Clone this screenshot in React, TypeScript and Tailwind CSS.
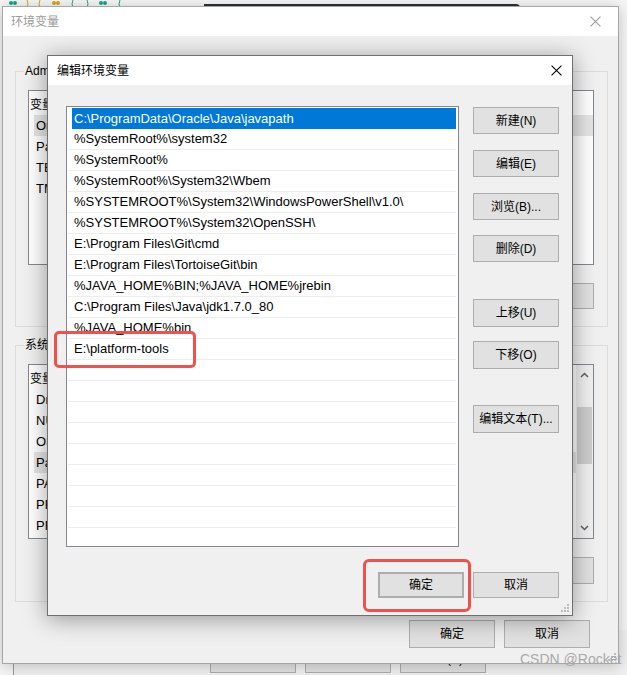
const FONT = "font-['Liberation_Sans','Noto_Sans_CJK_SC',sans-serif]";

const paths = [
  "C:\\ProgramData\\Oracle\\Java\\javapath",
  "%SystemRoot%\\system32",
  "%SystemRoot%",
  "%SystemRoot%\\System32\\Wbem",
  "%SYSTEMROOT%\\System32\\WindowsPowerShell\\v1.0\\",
  "%SYSTEMROOT%\\System32\\OpenSSH\\",
  "E:\\Program Files\\Git\\cmd",
  "E:\\Program Files\\TortoiseGit\\bin",
  "%JAVA_HOME%BIN;%JAVA_HOME%jrebin",
  "C:\\Program Files\\Java\\jdk1.7.0_80",
  "%JAVA_HOME%bin",
  "E:\\platform-tools",
];

const userVars = ["OneDrive", "Path", "TEMP", "TMP"];
const sysVars = [
  "DriverData",
  "NUMBER_OF_PROCESSORS",
  "OS",
  "Path",
  "PATHEXT",
  "PROCESSOR_ARCHITECTURE",
  "PROCESSOR_IDENTIFIER",
];

function Btn({ label, className = "" }: { label: string; className?: string }) {
  return (
    <div
      className={
        "flex w-[86px] shrink-0 items-center justify-center border border-[#adadad] bg-[#e1e1e1] text-[12px] text-black " +
        className
      }
    >
      {label}
    </div>
  );
}

function CloseX({ color, size }: { color: string; size: number }) {
  return (
    <svg width={size} height={size} viewBox="0 0 10 10">
      <path d="M0.5 0.5 L9.5 9.5 M9.5 0.5 L0.5 9.5" stroke={color} strokeWidth="1" />
    </svg>
  );
}

function Grip() {
  return (
    <svg width="9" height="9" viewBox="0 0 9 9">
      <rect x="7" y="1" width="2" height="2" fill="#bcbcbc" />
      <rect x="4" y="4" width="2" height="2" fill="#bcbcbc" />
      <rect x="7" y="4" width="2" height="2" fill="#bcbcbc" />
      <rect x="1" y="7" width="2" height="2" fill="#bcbcbc" />
      <rect x="4" y="7" width="2" height="2" fill="#bcbcbc" />
      <rect x="7" y="7" width="2" height="2" fill="#bcbcbc" />
    </svg>
  );
}

function VarList({ rows, selected, scroll }: { rows: string[]; selected: number; scroll?: boolean }) {
  return (
    <div className="ml-[12px] mt-[18px] flex h-[175px] w-[566px] overflow-hidden border border-[#828790] bg-white">
      <div className="flex-1 pt-[3px] text-[13px] text-black">
        <div className="flex h-[21px] items-center pl-[1px]">
          <span className="w-[200px] text-[12px]">变量</span>
          <span className="text-[12px]">值</span>
        </div>
        {rows.map((r, i) => (
          <div
            key={r + i}
            className={
              "ml-[5px] flex h-[21px] items-center pl-[2px] " + (i === selected ? "bg-[#e5e5e5]" : "")
            }
          >
            {r}
          </div>
        ))}
      </div>
      {scroll ? (
        <div className="flex w-[17px] flex-col bg-[#f0f0f0]">
          <div className="flex h-[20px] items-center justify-center">
            <svg width="9" height="6" viewBox="0 0 9 6">
              <path d="M1 5 L4.5 1.5 L8 5" stroke="#606060" strokeWidth="1.5" fill="none" />
            </svg>
          </div>
          <div className="mx-[1px] mt-[22px] h-[57px] bg-[#cdcdcd]" />
          <div className="flex-1" />
          <div className="flex h-[20px] items-center justify-center">
            <svg width="9" height="6" viewBox="0 0 9 6">
              <path d="M1 1 L4.5 4.5 L8 1" stroke="#606060" strokeWidth="1.5" fill="none" />
            </svg>
          </div>
        </div>
      ) : null}
    </div>
  );
}

function GroupBox({ title, height, className = "", children }: { title: string; height: string; className?: string; children: React.ReactNode }) {
  return (
    <div className={"relative w-[593px] border border-[#dcdcdc] " + height + " " + className}>
      <span className="absolute -top-[9px] left-[8px] bg-[#f0f0f0] px-[1px] text-[12px] leading-[16px] text-black">
        {title}
      </span>
      {children}
    </div>
  );
}

export default function App() {
  const emptyRows = Array.from({ length: 9 });

  return (
    <div className={`relative h-[675px] w-[627px] overflow-hidden bg-[#f6f6f6] ${FONT}`}>
      {/* desktop bits at the top */}
      <svg className="absolute left-0 top-0" width="140" height="8" viewBox="0 0 140 8">
        <circle cx="11" cy="3" r="2" fill="#17a589" />
        <circle cx="15" cy="3" r="2" fill="#17a589" />
        <path d="M27 0 Q29 4 27 8 M40 0 Q38 4 40 8" stroke="#d4a21a" strokeWidth="1" fill="none" />
        <circle cx="54" cy="3" r="2" fill="#d4a21a" />
        <circle cx="58" cy="3" r="2" fill="#d4a21a" />
        <path d="M73 0 Q71 4 73 8 M87 0 Q89 4 87 8" stroke="#17a589" strokeWidth="1" fill="none" />
        <circle cx="101" cy="3" r="2" fill="#17a589" />
        <circle cx="105" cy="3" r="2" fill="#17a589" />
        <path d="M120 0 Q118 4 120 8" stroke="#17a589" strokeWidth="1" fill="none" />
      </svg>
      <div className="absolute left-[204px] top-[4px] h-[6px] w-[316px] rounded-tr-[4px] bg-[#2d3139]" />

      {/* window behind, bottom strip */}
      <div className="absolute left-[13px] top-[630px] h-[60px] w-[614px] border-l border-[#9a9a9a] bg-[#f0f0f0]">
        <div className="flex gap-[9px] pl-[196px] pt-[15px]">
          <Btn label="确定" className="h-[28px]" />
          <Btn label="取消" className="h-[28px]" />
          <Btn label="应用(A)" className="h-[28px]" />
        </div>
      </div>

      {/* 环境变量 */}
      <div className="absolute left-[2px] top-[6px] flex h-[658px] w-[617px] flex-col border border-[#a6a6a6] bg-[#f0f0f0] shadow-[0_2px_14px_rgba(0,0,0,0.22)]">
        <div className="flex h-[29px] items-center justify-between bg-white pl-[8px] pr-[17px] text-[12px] text-[#9b9b9b]">
          <span>环境变量</span>
          <CloseX color="#9b9b9b" size={11} />
        </div>
        <div className="flex flex-1 flex-col pl-[12px] pt-[35px]">
          <GroupBox title="Administrator 的用户变量" height="h-[256px]">
            <VarList rows={userVars} selected={0} />
            <div className="mt-[18px] flex justify-end gap-[9px] pr-[13px]">
              <Btn label="新建(N)..." className="h-[26px]" />
              <Btn label="编辑(E)..." className="h-[26px]" />
              <Btn label="删除(D)" className="h-[26px]" />
            </div>
          </GroupBox>
          <GroupBox title="系统变量(S)" height="h-[257px]" className="mt-[18px]">
            <VarList rows={sysVars} selected={3} scroll />
            <div className="mt-[18px] flex justify-end gap-[9px] pr-[13px]">
              <Btn label="新建(W)..." className="h-[27px]" />
              <Btn label="编辑(I)..." className="h-[27px]" />
              <Btn label="删除(L)" className="h-[27px]" />
            </div>
          </GroupBox>
          <div className="mt-[18px] flex w-[593px] justify-end gap-[9px] pr-[18px]">
            <Btn label="确定" className="h-[28px]" />
            <Btn label="取消" className="h-[28px]" />
          </div>
        </div>
        <div className="absolute bottom-[2px] right-[2px]">
          <Grip />
        </div>
      </div>

      {/* 编辑环境变量 */}
      <div className="absolute left-[47px] top-[55px] flex h-[561px] w-[526px] flex-col border border-[#707070] bg-[#f0f0f0] shadow-[0_3px_22px_rgba(0,0,0,0.38)]">
        <div className="flex h-[29px] items-center justify-between bg-white pl-[9px] pr-[10px] text-[12px] text-black">
          <span>编辑环境变量</span>
          <CloseX color="#000000" size={11} />
        </div>
        <div className="relative flex flex-1 flex-col pl-[18px] pt-[21px]">
          <div className="flex">
            <div className="h-[441px] w-[393px] overflow-hidden border border-[#828790] bg-white pt-[1px] text-[13px]">
              {paths.map((p, i) => (
                <div
                  key={p}
                  className={
                    i === 0
                      ? "ml-[5px] mr-[2px] flex h-[21px] items-center bg-[#0078d7] pl-[2px] text-white"
                      : "ml-[1px] mr-[2px] flex h-[21px] items-center border-b border-[#ededed] pl-[6px] text-black"
                  }
                >
                  {p}
                </div>
              ))}
              {emptyRows.map((_, i) => (
                <div key={i} className="ml-[1px] mr-[2px] h-[21px] border-b border-[#ededed]" />
              ))}
            </div>
            <div className="ml-[14px] flex w-[86px] flex-col">
              <Btn label="新建(N)" className="mt-[1px] h-[27px]" />
              <Btn label="编辑(E)" className="mt-[16px] h-[27px]" />
              <Btn label="浏览(B)..." className="mt-[16px] h-[27px]" />
              <Btn label="删除(D)" className="mt-[15px] h-[27px]" />
              <Btn label="上移(U)" className="mt-[37px] h-[28px]" />
              <Btn label="下移(O)" className="mt-[14px] h-[28px]" />
              <Btn label="编辑文本(T)..." className="mt-[36px] h-[28px]" />
            </div>
          </div>
          <div className="mt-[25px] flex justify-end gap-[9px] pr-[13px]">
            <Btn label="确定" className="h-[26px] border-2 border-[#0078d7]" />
            <Btn label="取消" className="h-[26px]" />
          </div>
          <div className="absolute bottom-[3px] right-[3px]">
            <Grip />
          </div>
        </div>
      </div>

      {/* annotations */}
      <div className="absolute left-[54px] top-[331px] h-[37px] w-[142px] rounded-[5px] border-[3px] border-[#f0514d]" />
      <div className="absolute left-[363px] top-[559px] h-[53px] w-[108px] rounded-[6px] border-[3px] border-[#f0514d]" />

      {/* watermark */}
      <div className="absolute left-[520px] top-[650px] text-[14px] leading-[18px] text-[#a9a9a9]">CSDN @Rocket</div>
    </div>
  );
}
